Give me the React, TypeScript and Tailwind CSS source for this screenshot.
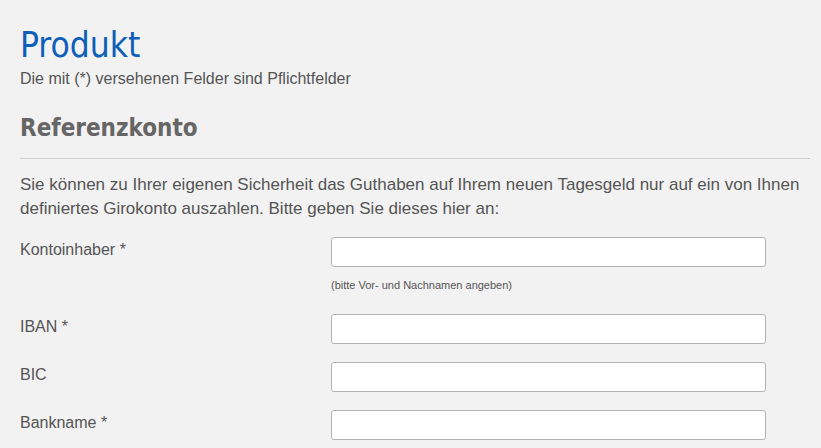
export default function App() {
  const fields = [
    { label: "Kontoinhaber *", hint: "(bitte Vor- und Nachnamen angeben)" },
    { label: "IBAN *" },
    { label: "BIC" },
    { label: "Bankname *" },
  ];

  return (
    <div className="min-h-[448px] w-full overflow-hidden bg-[#f2f2f2] pl-5 pr-[11px] pt-[24px] font-['Liberation_Sans',Arial,sans-serif] text-[#555]">
      <h1 className="font-['DejaVu_Sans_Condensed','DejaVu_Sans',sans-serif] text-[35px] leading-[42px] text-[#0d5fb8]">
        Produkt
      </h1>
      <p className="mt-[3px] text-[16px] leading-[20px]">
        Die mit (*) versehenen Felder sind Pflichtfelder
      </p>
      <h2 className="mt-[24px] pb-[15px] font-['DejaVu_Sans_Condensed','DejaVu_Sans',sans-serif] text-[24px] font-bold leading-[30px] text-[#666] border-b border-[#cfcfcf]">
        Referenzkonto
      </h2>
      <p className="mt-[14px] text-[17px] leading-[24px]">
        Sie können zu Ihrer eigenen Sicherheit das Guthaben auf Ihrem neuen Tagesgeld nur auf ein von Ihnen
        definiertes Girokonto auszahlen. Bitte geben Sie dieses hier an:
      </p>
      <div className="mt-[16px] flex flex-col gap-[18px]">
        {fields.map((f) => (
          <div key={f.label} className="grid grid-cols-[311px_435px]">
            <label className="pt-[3px] text-[16px] leading-[20px]">{f.label}</label>
            <div className="flex flex-col">
              <input
                type="text"
                className="h-[30px] w-full rounded-[3px] border border-[#b3b3b3] bg-white px-2 outline-none"
              />
              {f.hint && (
                <span className="mt-[11px] mb-[4px] text-[11px] leading-[14px] text-[#555]">{f.hint}</span>
              )}
            </div>
          </div>
        ))}
      </div>
    </div>
  );
}
